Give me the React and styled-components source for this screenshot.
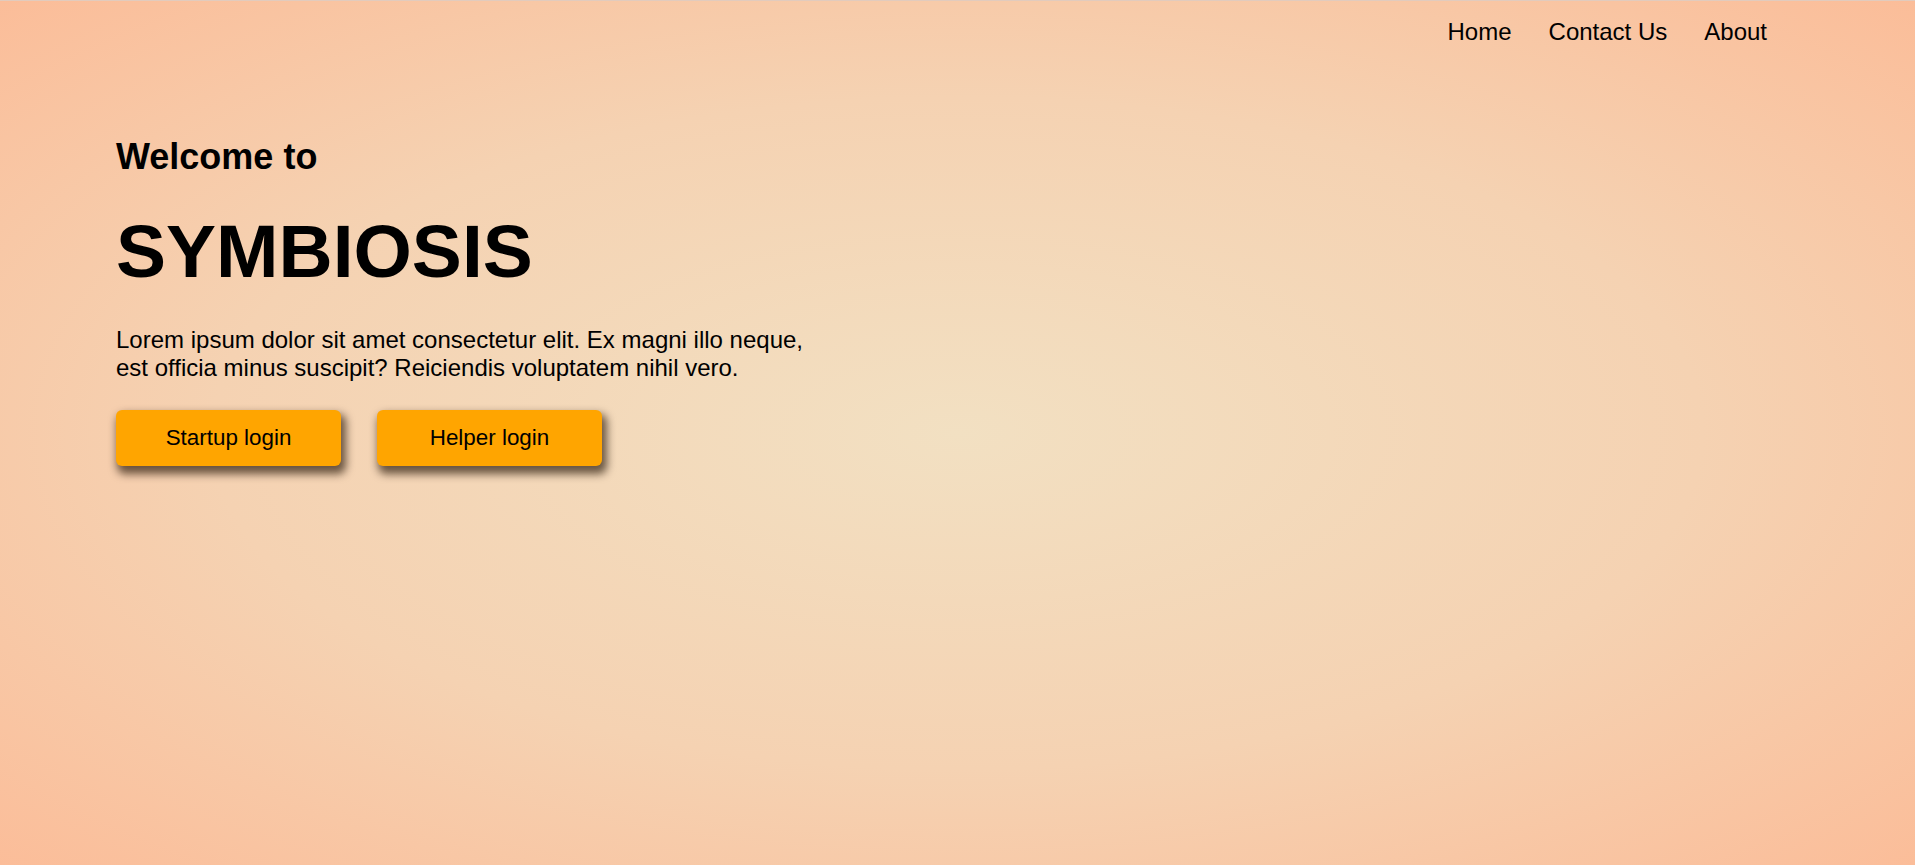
import React from 'react';
import styled, { createGlobalStyle } from 'styled-components';

const GlobalStyle = createGlobalStyle`
    html,
    body {
        margin: 0;
        padding: 0;
        background-color: #fbbd99;
    }
    body {
        font-family: 'Liberation Sans', Arial, sans-serif;
        color: #000;
    }
    ::-webkit-scrollbar {
        width: 6px;
    }
    ::-webkit-scrollbar-track {
        background: transparent;
        margin: 20px 0;
    }
    ::-webkit-scrollbar-thumb {
        background-color: #8a837e;
        border-right: 3px solid transparent;
        background-clip: padding-box;
    }
`;

const App = () => {
    return (
        <>
            <GlobalStyle />
            <Page>
                <Hero>
                    <Nav>
                        <NavLink href='#'>Home</NavLink>
                        <NavLink href='#'>Contact Us</NavLink>
                        <NavLink href='#'>About</NavLink>
                    </Nav>
                    <Content>
                        <Welcome>Welcome to</Welcome>
                        <Brand>SYMBIOSIS</Brand>
                        <Intro>
                            Lorem ipsum dolor sit amet consectetur elit. Ex magni illo neque, est officia minus
                            suscipit? Reiciendis voluptatem nihil vero.
                        </Intro>
                        <Buttons>
                            <LoginButton>Startup login</LoginButton>
                            <LoginButton>Helper login</LoginButton>
                        </Buttons>
                    </Content>
                </Hero>
            </Page>
        </>
    );
};

const Page = styled.div`
    min-height: 134vh;
    border-top: 1px solid #e2cbbd;
    box-sizing: border-box;
    background-color: #fbbd99;
`;

const Hero = styled.section`
    height: calc(100vh - 1px);
    background: radial-gradient(ellipse at center, #f2e0c2 0%, #f5d2b2 55%, #fbbd99 100%);
    display: flex;
    flex-direction: column;
`;

const Nav = styled.nav`
    display: flex;
    justify-content: flex-end;
    gap: 37px;
    padding: 17px 148px 0 0;
`;

const NavLink = styled.a`
    font-size: 24px;
    color: #000;
    text-decoration: none;
    cursor: pointer;
`;

const Content = styled.div`
    display: flex;
    flex-direction: column;
    align-items: flex-start;
    margin-top: 90px;
    padding-left: 116px;
`;

const Welcome = styled.h2`
    margin: 0;
    font-size: 36px;
    font-weight: bold;
`;

const Brand = styled.h1`
    margin: 30px 0 0;
    font-size: 75px;
    font-weight: bold;
`;

const Intro = styled.p`
    margin: 32px 0 0;
    max-width: 700px;
    font-size: 24px;
`;

const Buttons = styled.div`
    display: flex;
    gap: 36px;
    margin-top: 28px;
`;

const LoginButton = styled.button`
    width: 225px;
    height: 56px;
    border: none;
    border-radius: 6px;
    background-color: #ffa500;
    color: #000;
    font-family: 'Liberation Sans', Arial, sans-serif;
    font-size: 22.4px;
    box-shadow: 3px 6px 8px 2px rgba(30, 15, 0, 0.65);
    cursor: pointer;
`;

export default App;
